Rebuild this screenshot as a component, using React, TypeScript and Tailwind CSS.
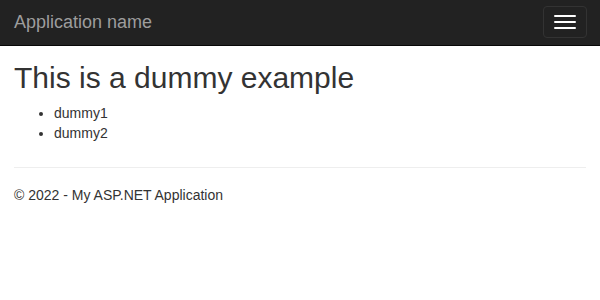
import React from 'react';

const App: React.FC = () => {
  return (
    <div className="min-h-[300px] bg-white text-[14px] leading-[20px] text-[#333] font-['Liberation_Sans',Arial,sans-serif]">
      {/* Navbar */}
      <nav className="h-[46px] bg-[#222] border-b border-[#080808] flex items-center justify-between px-[14px]">
        <a href="#" className="text-[18px] leading-[20px] text-[#9d9d9d] -mt-[1px]">
          Application name
        </a>
        <button className="w-[44px] h-[32px] -mr-[1px] rounded-[4px] border border-[#333] flex flex-col items-center justify-center gap-[4px] -mt-[1px]">
          <span className="block w-[22px] h-[2px] rounded-[1px] bg-white" />
          <span className="block w-[22px] h-[2px] rounded-[1px] bg-white" />
          <span className="block w-[22px] h-[2px] rounded-[1px] bg-white" />
        </button>
      </nav>

      {/* Body */}
      <div className="px-[14px]">
        <h1 className="mt-[15px] mb-[9px] text-[30px] leading-[33px] font-normal">This is a dummy example</h1>
        <ul className="list-disc pl-[40px]">
          <li>dummy1</li>
          <li>dummy2</li>
        </ul>
        <hr className="mt-[24px] border-t border-[#eee]" />
        <footer>
          <p className="mt-[17px]">© 2022 - My ASP.NET Application</p>
        </footer>
      </div>
    </div>
  );
};

export default App;
